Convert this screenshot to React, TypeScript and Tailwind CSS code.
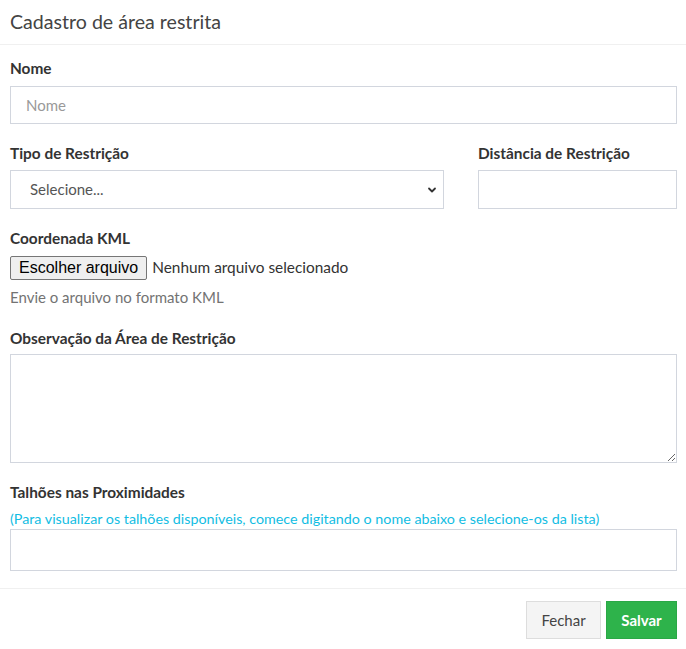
import React from 'react';

const font = { fontFamily: 'Lato, "Noto Sans", sans-serif' };

function Label({ children, className = '' }: { children: React.ReactNode; className?: string }) {
  return <label className={`block h-5 text-[15.4px] font-bold leading-5 text-[#333] ${className}`}>{children}</label>;
}

export default function App() {
  return (
    <div className="h-[649px] w-[686px] bg-white text-[#333]" style={font}>
      {/* cabeçalho */}
      <div className="flex h-[45px] items-center border-b border-[#f0f0f0] px-[10px]">
        <h4 className="text-[19.6px] font-normal leading-none text-[#444]">Cadastro de área restrita</h4>
      </div>

      <div className="pl-[10px] pr-[9px] pt-[13px]">
        <Label>Nome</Label>
        <input
          placeholder="Nome"
          className="mt-[8px] block h-[38px] w-full border border-[#d2d6de] px-[15px] text-[15px] text-[#555] outline-none placeholder:text-[#999]"
        />

        <div className="mt-[19px] grid grid-cols-[434px_1fr] gap-x-[34px]">
          <div>
            <Label>Tipo de Restrição</Label>
            <div className="relative mt-[7px] flex h-[39px] items-center border border-[#d2d6de] pl-[19px] text-[15px] text-[#555]">
              Selecione...
              <svg className="absolute right-[6px] top-[14px] h-[10px] w-[10px]" viewBox="0 0 10 10" fill="none">
                <path d="M2 3.5 5 6.5 8 3.5" stroke="#333" strokeWidth="1.8" strokeLinecap="round" strokeLinejoin="round" />
              </svg>
            </div>
          </div>
          <div>
            <Label>Distância de Restrição</Label>
            <input className="mt-[7px] block h-[39px] w-full border border-[#d2d6de] outline-none" />
          </div>
        </div>

        <Label className="mt-[19px]">Coordenada KML</Label>
        <div className="mt-[8px] flex items-center gap-[5px]">
          <span
            className="flex h-[24px] items-center rounded-[2px] border border-[#767676] bg-[#efefef] px-[8px] text-[16px] text-black"
            style={{ fontFamily: '"Liberation Sans", Arial, sans-serif' }}
          >
            Escolher arquivo
          </span>
          <span className="text-[15.4px] text-[#333]">Nenhum arquivo selecionado</span>
        </div>
        <p className="mt-[7px] h-5 text-[15px] leading-5 text-[#737373]">Envie o arquivo no formato KML</p>

        <Label className="mt-[21px]">Observação da Área de Restrição</Label>
        <textarea className="mt-[6px] block h-[109px] w-full border border-[#d2d6de] outline-none" />

        <Label className="mt-[19px]">Talhões nas Proximidades</Label>
        <p className="mt-[7px] h-5 whitespace-nowrap text-[14.3px] leading-5 text-[#12bde3]">
          (Para visualizar os talhões disponíveis, comece digitando o nome abaixo e selecione-os da lista)
        </p>
        <input className="block h-[42px] w-full border border-[#d2d6de] outline-none" />
      </div>

      {/* rodapé */}
      <div className="mt-[17px] flex justify-end gap-[5px] border-t border-[#f0f0f0] pl-[10px] pr-[9px] pt-[12px]">
        <button className="h-[38px] w-[75px] border border-[#ddd] bg-[#f4f4f4] text-[15px] text-[#444]">Fechar</button>
        <button className="h-[38px] w-[71px] border border-[#2aa846] bg-[#2eb34b] text-[15px] font-bold text-white">
          Salvar
        </button>
      </div>
    </div>
  );
}
